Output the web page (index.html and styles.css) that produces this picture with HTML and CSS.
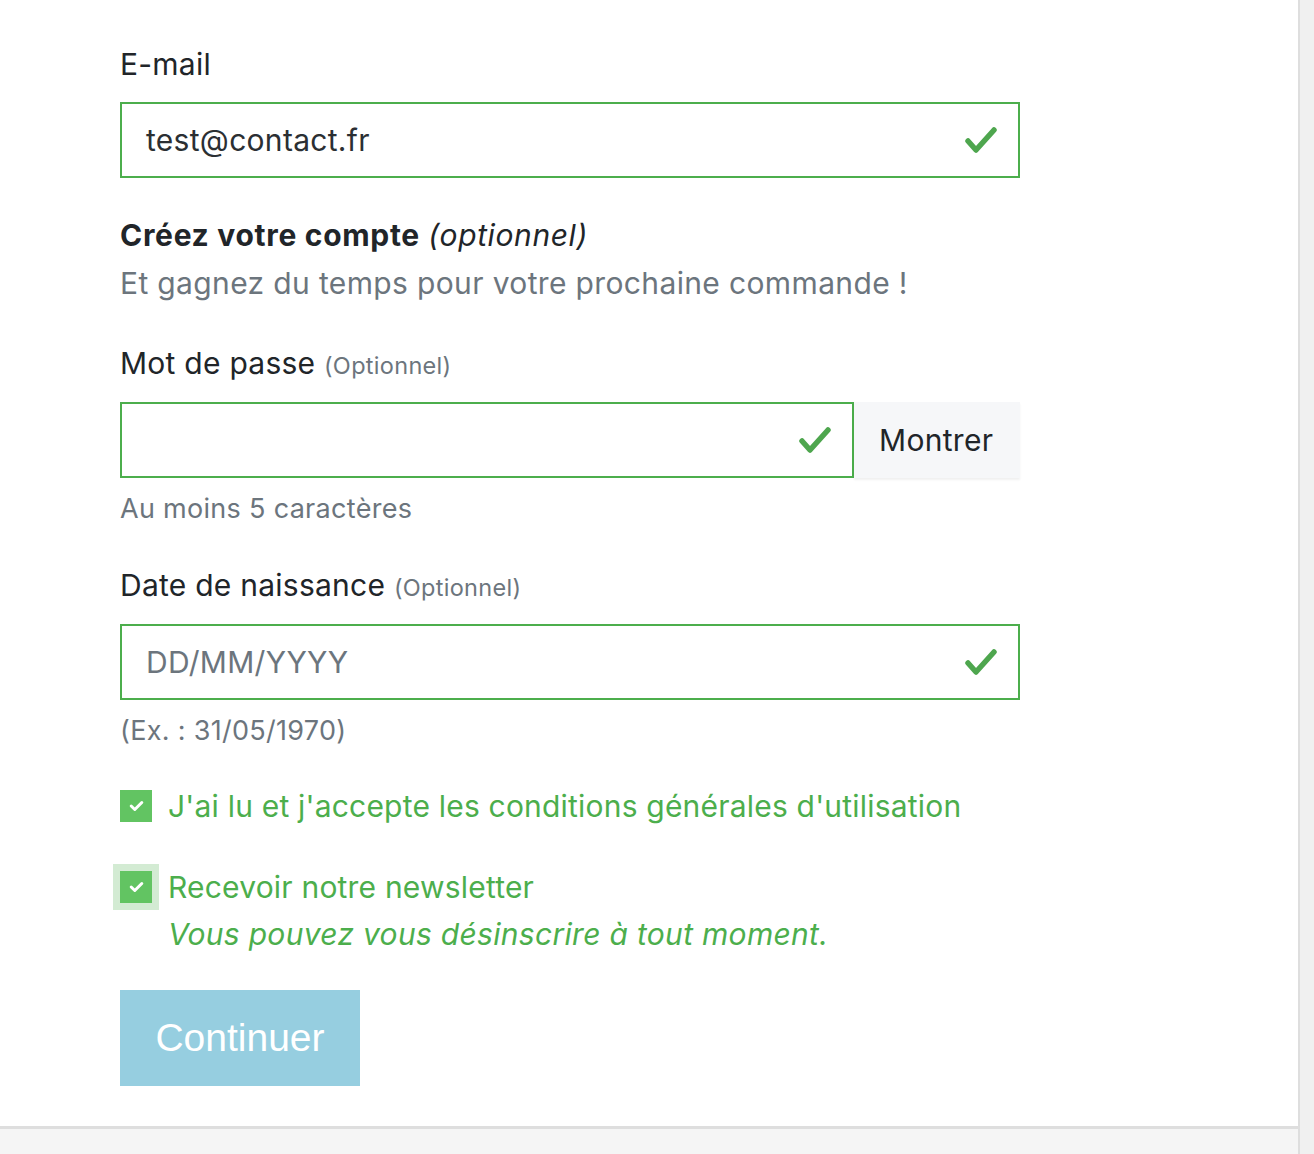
FILE: index.html
```html
<!DOCTYPE html>
<html lang="fr">
<head>
<meta charset="utf-8">
<title>Créez votre compte</title>
<link rel="stylesheet" href="styles.css">
</head>
<body>
<div class="page">
  <main class="panel">
    <form class="form">
      <div class="field field-first">
        <label class="label">E-mail</label>
        <div class="input valid">
          <span class="value">test@contact.fr</span>
          <svg class="check" width="34" height="30" viewBox="0 0 34 30"><path d="M4 16 L12 25 L30 5" fill="none" stroke="#4ea64e" stroke-width="5.5" stroke-linecap="round" stroke-linejoin="round"/></svg>
        </div>
      </div>

      <div class="account">
        <p class="account-title"><strong>Créez votre compte</strong> <em>(optionnel)</em></p>
        <p class="account-sub">Et gagnez du temps pour votre prochaine commande !</p>
      </div>

      <div class="field field-pwd">
        <label class="label label-low">Mot de passe <span class="opt">(Optionnel)</span></label>
        <div class="group">
          <div class="input valid grow">
            <span class="value"></span>
            <svg class="check" width="34" height="30" viewBox="0 0 34 30"><path d="M4 16 L12 25 L30 5" fill="none" stroke="#4ea64e" stroke-width="5.5" stroke-linecap="round" stroke-linejoin="round"/></svg>
          </div>
          <button type="button" class="show">Montrer</button>
        </div>
        <p class="help help-pwd">Au moins 5 caractères</p>
      </div>

      <div class="field field-date">
        <label class="label label-low">Date de naissance <span class="opt">(Optionnel)</span></label>
        <div class="input valid">
          <span class="value placeholder">DD/MM/YYYY</span>
          <svg class="check" width="34" height="30" viewBox="0 0 34 30"><path d="M4 16 L12 25 L30 5" fill="none" stroke="#4ea64e" stroke-width="5.5" stroke-linecap="round" stroke-linejoin="round"/></svg>
        </div>
        <p class="help help-date">(Ex. : 31/05/1970)</p>
      </div>

      <div class="checks">
        <div class="check-row">
          <span class="box-wrap"><span class="box"><svg width="15" height="12" viewBox="0 0 15 12"><path d="M2.2 6 L5.8 9.5 L12.8 2.5" fill="none" stroke="#fff" stroke-width="3" stroke-linecap="round" stroke-linejoin="round"/></svg></span></span>
          <span class="check-label">J'ai lu et j'accepte les conditions générales d'utilisation</span>
        </div>
        <div class="check-row row-news">
          <span class="box-wrap focus"><span class="box"><svg width="15" height="12" viewBox="0 0 15 12"><path d="M2.2 6 L5.8 9.5 L12.8 2.5" fill="none" stroke="#fff" stroke-width="3" stroke-linecap="round" stroke-linejoin="round"/></svg></span></span>
          <span class="check-text">
            <span class="check-label">Recevoir notre newsletter</span>
            <em class="check-note">Vous pouvez vous désinscrire à tout moment.</em>
          </span>
        </div>
      </div>

      <button type="button" class="continue">Continuer</button>
    </form>
  </main>
  <footer class="foot"></footer>
</div>
</body>
</html>
```

FILE: styles.css
```css
* { box-sizing: border-box; }
html, body { margin: 0; padding: 0; }
body {
  background: #f0f0f0;
  font-family: Inter, "Noto Sans", sans-serif;
  color: #212529;
  height: 1154px;
  overflow: hidden;
}
.page {
  width: 1300px;
  border-right: 2px solid #dedede;
  height: 1154px;
  display: flex;
  flex-direction: column;
}
.panel {
  background: #fff;
  height: 1126px;
  padding-left: 120px;
}
.foot {
  flex: 1;
  background: #f5f5f5;
  border-top: 3px solid #dedede;
}
.form {
  width: 900px;
  display: flex;
  flex-direction: column;
}
.field-first { padding-top: 46px; }
.label {
  display: block;
  font-size: 30px;
  line-height: 36px;
  margin-bottom: 20px;
  color: #212529;
  letter-spacing: 0.25px;
}
.label-low { margin-bottom: 18px; }
.opt {
  font-size: 23.5px;
  color: #6c757d;
  letter-spacing: 0.3px;
}
.input {
  height: 76px;
  border: 2px solid #4cae4c;
  display: flex;
  align-items: center;
  justify-content: space-between;
  padding: 0 20px 0 24px;
  background: #fff;
}
.value {
  font-size: 30px;
  color: #2b2f33;
  letter-spacing: 0.3px;
}
.placeholder { color: #6c757d; }
.check { display: block; }
.account { margin-top: 39px; }
.account p { margin: 0; font-size: 30px; line-height: 36px; }
.account-title strong { font-weight: 700; color: #212529; letter-spacing: 0.7px; }
.account-title em { font-style: italic; letter-spacing: 0.6px; }
.account-sub { color: #6c757d; margin-top: 12px !important; letter-spacing: 0.36px; }
.field-pwd { margin-top: 44px; }
.group { display: flex; }
.grow { flex: 1; }
.show {
  width: 166px;
  height: 76px;
  border: none;
  background: #f6f7f9;
  box-shadow: 0 2px 2px rgba(0,0,0,0.06);
  font-family: Inter, "Noto Sans", sans-serif;
  font-size: 30px;
  letter-spacing: 0.3px;
  color: #212529;
  text-align: left;
  padding: 0 0 0 25px;
}
.help {
  margin: 13px 0 0;
  font-size: 27px;
  line-height: 32px;
  color: #6c757d;
  letter-spacing: 0.3px;
}
.help-pwd { margin-top: 15px; }
.help-date { margin-top: 15px; }
.field-date { margin-top: 42px; }
.checks { margin-top: 43px; display: flex; flex-direction: column; gap: 47px; }
.check-row { display: flex; align-items: flex-start; gap: 16px; }
.box-wrap {
  width: 32px; height: 32px;
  display: flex; align-items: center; justify-content: center;
  flex: none;
}
.box-wrap.focus { box-shadow: 0 0 0 7px #d3ebd3; }
.box {
  width: 32px; height: 32px;
  background: #62c462;
  display: flex; align-items: center; justify-content: center;
}
.check-text { display: flex; flex-direction: column; }
.check-label {
  font-size: 30px;
  line-height: 36px;
  color: #4cae4c;
  margin-top: -2px;
  letter-spacing: 0.2px;
}
.check-note {
  font-size: 30px;
  line-height: 36px;
  color: #4cae4c;
  font-style: italic;
  margin-top: 11px;
  letter-spacing: 0.3px;
}
.continue {
  margin-top: 38px;
  align-self: flex-start;
  width: 240px;
  height: 96px;
  border: none;
  background: #96cee0;
  color: #fff;
  font-family: "Liberation Sans", Arial, sans-serif;
  font-size: 39px;
  padding: 0;
}
```
